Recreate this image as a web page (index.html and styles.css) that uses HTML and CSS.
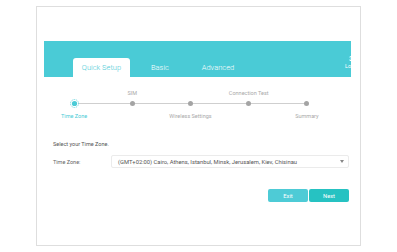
FILE: index.html
```html
<!DOCTYPE html>
<html lang="en">
<head>
    <meta charset="UTF-8">
    <meta name="viewport" content="width=device-width, initial-scale=1.0">
    <title>Quick Setup</title>
    <link rel="stylesheet" href="styles.css">
</head>
<body>
    <div class="frame">
        <div class="header">
            <div class="tabs">
                <div class="tab active">Quick Setup</div>
                <div class="tab">Basic</div>
                <div class="tab">Advanced</div>
            </div>
            <div class="logout">
                <span class="logout-icon">3</span>
                <span class="logout-text">Logout</span>
            </div>
        </div>

        <div class="stepper">
            <div class="step current">
                <span class="step-top"></span>
                <span class="dot">
                    <svg width="9" height="9" viewBox="0 0 9 9">
                        <circle cx="4.5" cy="4.5" r="4" fill="#fff" stroke="#4acbd6" stroke-width="0.8" stroke-dasharray="1 0.8"/>
                        <circle cx="4.5" cy="4.5" r="2.6" fill="#4acbd6"/>
                    </svg>
                </span>
                <span class="step-bottom">Time Zone</span>
            </div>
            <div class="step">
                <span class="step-top">SIM</span>
                <span class="dot"></span>
                <span class="step-bottom"></span>
            </div>
            <div class="step">
                <span class="step-top"></span>
                <span class="dot"></span>
                <span class="step-bottom">Wireless Settings</span>
            </div>
            <div class="step">
                <span class="step-top">Connection Test</span>
                <span class="dot"></span>
                <span class="step-bottom"></span>
            </div>
            <div class="step">
                <span class="step-top"></span>
                <span class="dot"></span>
                <span class="step-bottom">Summary</span>
            </div>
        </div>

        <div class="form">
            <p class="hint">Select your Time Zone.</p>
            <div class="row">
                <label class="row-label">Time Zone:</label>
                <div class="select">
                    <span>(GMT+02:00) Cairo, Athens, Istanbul, Minsk, Jerusalem, Kiev, Chisinau</span>
                    <span class="arrow"></span>
                </div>
            </div>
            <div class="actions">
                <button class="btn exit">Exit</button>
                <button class="btn next">Next</button>
            </div>
        </div>
    </div>
</body>
</html>
```

FILE: styles.css
```css
* {
    box-sizing: border-box;
}
body {
    margin: 0;
    font-family: Roboto, "Liberation Sans", Arial, sans-serif;
    background: #fff;
}
.frame {
    margin: 6px 0 0 36px;
    width: 325px;
    height: 240px;
    border: 1px solid #dedede;
    padding: 34px 9px 0 7px;
}
.header {
    position: relative;
    height: 36px;
    background: #4acbd6;
    overflow: hidden;
    display: flex;
    align-items: flex-end;
    padding-left: 29px;
}
.tabs {
    display: flex;
}
.tab {
    width: 58px;
    height: 19px;
    line-height: 20px;
    text-align: center;
    font-size: 7.5px;
    font-weight: 300;
    color: #fff;
}
.tab.active {
    width: 57px;
    margin-right: 1px;
    background: #fff;
    color: #4acbd6;
    border-radius: 3px 3px 0 0;
}
.logout {
    position: absolute;
    left: 301px;
    top: 14px;
    display: flex;
    flex-direction: column;
    align-items: flex-start;
    color: #fff;
}
.logout-icon {
    margin-left: 4px;
    font-size: 8px;
    line-height: 8px;
    font-weight: bold;
}
.logout-text {
    font-size: 5.5px;
    line-height: 7px;
}
.stepper {
    position: relative;
    display: flex;
    width: 291px;
    margin: 12px 0 0 1px;
}
.stepper::before {
    content: "";
    position: absolute;
    left: 29px;
    right: 29px;
    top: 13.5px;
    height: 1.5px;
    background: #cfcfcf;
}
.step {
    flex: 1;
    display: flex;
    flex-direction: column;
    align-items: center;
    font-size: 5.5px;
    color: #a9a9a9;
}
.step-top,
.step-bottom {
    height: 8px;
    line-height: 8px;
    white-space: nowrap;
}
.step-bottom {
    margin-top: 4px;
}
.dot {
    position: relative;
    width: 9px;
    height: 9px;
    margin-top: 2px;
    display: flex;
    align-items: center;
    justify-content: center;
}
.dot::after {
    content: "";
    width: 5px;
    height: 5px;
    border-radius: 50%;
    background: #a4a4a4;
}
.step.current .dot::after {
    display: none;
}
.step.current .step-bottom {
    color: #4acbd6;
}
.form {
    padding: 0 2px 0 9px;
}
.hint {
    margin: 20px 0 0;
    font-size: 5.5px;
    line-height: 8px;
    color: #555;
}
.row {
    display: flex;
    align-items: center;
    margin-top: 7px;
}
.row-label {
    width: 58px;
    font-size: 5.5px;
    color: #666;
}
.select {
    flex: 1;
    height: 13px;
    display: flex;
    align-items: center;
    justify-content: space-between;
    padding: 0 4px 0 6px;
    border: 1px solid #ebebeb;
    border-radius: 2px;
    font-size: 5.8px;
    color: #555;
}
.arrow {
    width: 0;
    height: 0;
    border-left: 2.5px solid transparent;
    border-right: 2.5px solid transparent;
    border-top: 3px solid #888;
}
.actions {
    display: flex;
    justify-content: flex-end;
    gap: 1px;
    margin-top: 21px;
}
.btn {
    width: 40px;
    height: 13px;
    padding: 0;
    border: none;
    border-radius: 2px;
    color: #fff;
    font-family: inherit;
    font-size: 5.8px;
}
.btn.exit {
    background: #4ecbd6;
}
.btn.next {
    background: #26c2c2;
}
```
